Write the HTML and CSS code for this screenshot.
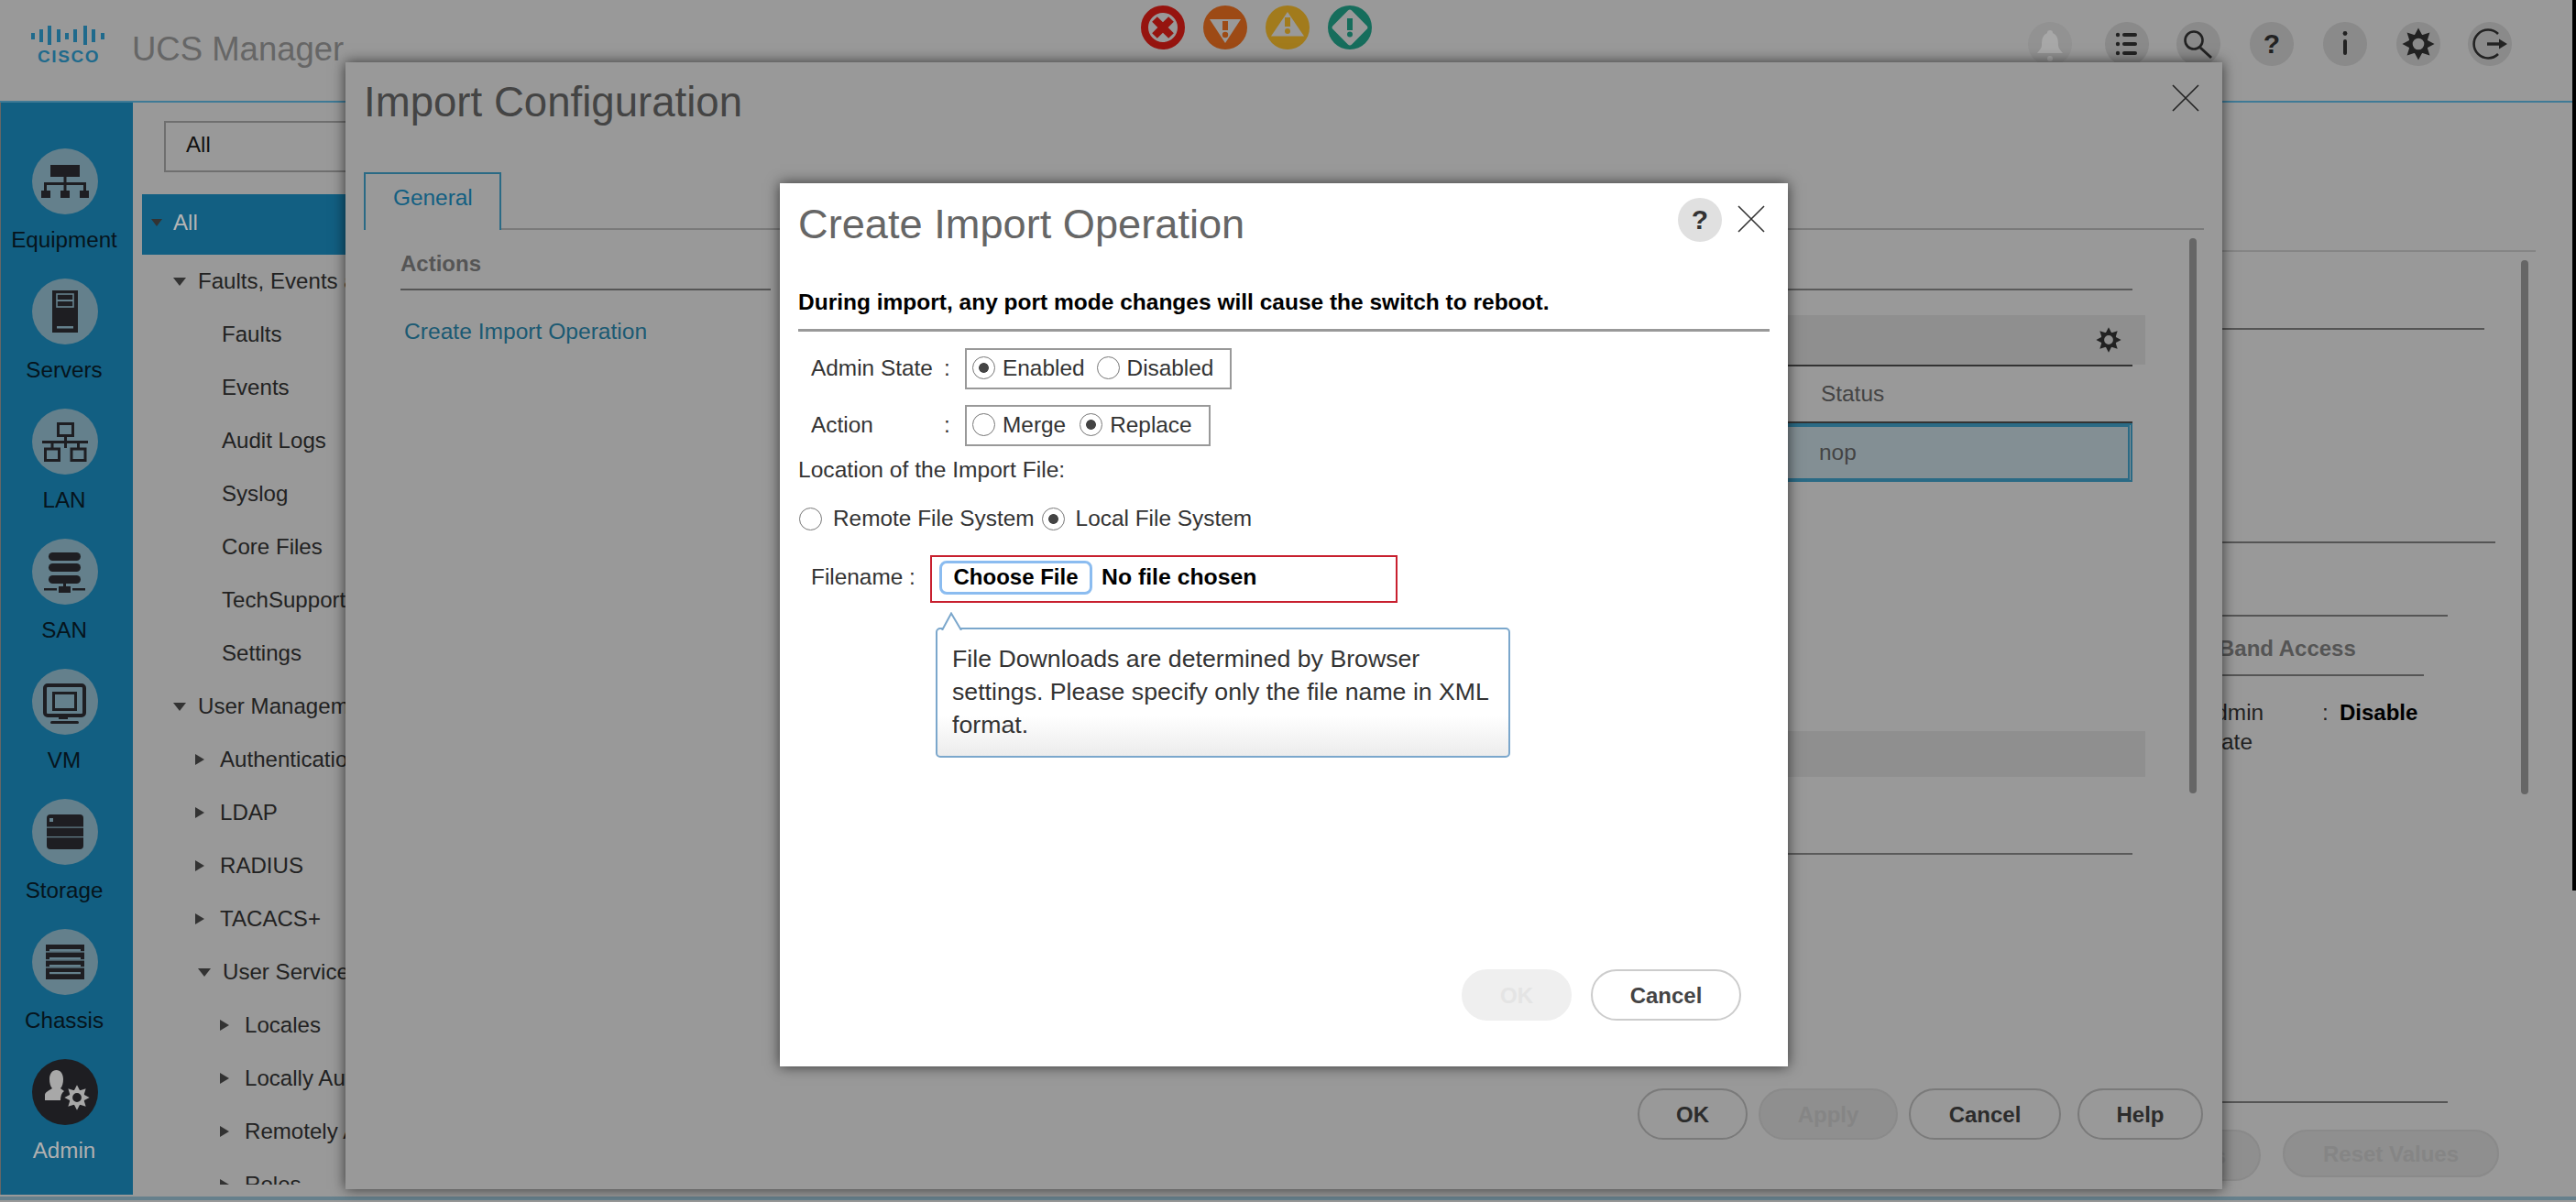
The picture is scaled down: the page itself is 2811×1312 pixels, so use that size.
FILE: index.html
```html
<!DOCTYPE html>
<html lang="en">
<head>
  <meta charset="UTF-8">
  <meta name="viewport" content="width=device-width, initial-scale=1.0">
  <title>UCS Manager - Create Import Operation</title>
  <link rel="stylesheet" href="styles.css">
</head>
<body>

<svg class="defs" xmlns="http://www.w3.org/2000/svg">
  <symbol id="gear" viewBox="-20 -20 40 40">
    <circle r="9.5" fill="none" stroke="currentColor" stroke-width="5"/>
    <g fill="currentColor">
      <polygon points="-5,-10 0,-19.5 5,-10"/>
      <polygon points="-5,-10 0,-19.5 5,-10" transform="rotate(45)"/>
      <polygon points="-5,-10 0,-19.5 5,-10" transform="rotate(90)"/>
      <polygon points="-5,-10 0,-19.5 5,-10" transform="rotate(135)"/>
      <polygon points="-5,-10 0,-19.5 5,-10" transform="rotate(180)"/>
      <polygon points="-5,-10 0,-19.5 5,-10" transform="rotate(225)"/>
      <polygon points="-5,-10 0,-19.5 5,-10" transform="rotate(270)"/>
      <polygon points="-5,-10 0,-19.5 5,-10" transform="rotate(315)"/>
    </g>
  </symbol>
  <symbol id="close-x" viewBox="0 0 30 30">
    <path d="M1 1 L29 29 M29 1 L1 29" fill="none" stroke="currentColor" stroke-width="1.6"/>
  </symbol>
</svg>

<!-- top bar -->
<header class="topbar">
  <div class="logo">
    <svg class="logo-bars" viewBox="0 0 81 22" width="81" height="22">
      <g fill="#1f6a8c">
        <rect x="1" y="8" width="4" height="7"/>
        <rect x="10" y="4" width="4" height="14"/>
        <rect x="19" y="0" width="4" height="21"/>
        <rect x="29" y="4" width="4" height="14"/>
        <rect x="38" y="8" width="4" height="7"/>
        <rect x="47" y="4" width="4" height="14"/>
        <rect x="58" y="0" width="4" height="21"/>
        <rect x="67" y="4" width="4" height="14"/>
        <rect x="77" y="8" width="4" height="7"/>
      </g>
    </svg>
    <span class="logo-word">CISCO</span>
  </div>
  <div class="app-name">UCS Manager</div>

  <div class="status-icons">
    <svg viewBox="0 0 48 48" width="48" height="48">
      <circle cx="24" cy="24" r="20" fill="#999" stroke="#96140f" stroke-width="8"/>
      <path d="M15 15 L33 33 M33 15 L15 33" stroke="#96140f" stroke-width="8" fill="none"/>
    </svg>
    <svg viewBox="0 0 48 48" width="48" height="48">
      <circle cx="24" cy="24" r="24" fill="#9d4a15"/>
      <polygon points="7,15 41,15 24,41" fill="#999"/>
      <rect x="21" y="17" width="6" height="10" fill="#9d4a15"/>
      <circle cx="24" cy="32" r="3.2" fill="#9d4a15"/>
    </svg>
    <svg viewBox="0 0 48 48" width="48" height="48">
      <circle cx="24" cy="24" r="24" fill="#a27b1c"/>
      <polygon points="24,7 42,33.5 6,33.5" fill="#999"/>
      <rect x="21" y="13" width="6" height="10" fill="#a27b1c"/>
      <circle cx="24" cy="28" r="3" fill="#a27b1c"/>
    </svg>
    <svg viewBox="0 0 48 48" width="48" height="48">
      <circle cx="24" cy="24" r="24" fill="#166d5c"/>
      <rect x="9.5" y="9.5" width="29" height="29" rx="3" fill="#999" transform="rotate(45 24 24)"/>
      <rect x="21" y="14" width="6" height="13" fill="#166d5c"/>
      <circle cx="24" cy="31.5" r="3" fill="#166d5c"/>
    </svg>
  </div>

  <div class="tools">
    <div class="tool tool-off">
      <svg viewBox="0 0 48 48" width="48" height="48">
        <path d="M24 9 a3 3 0 0 1 3 3 c5 2 6 7 6 13 c0 4 3 6 5 9 H10 c2 -3 5 -5 5 -9 c0 -6 1 -11 6 -13 a3 3 0 0 1 3 -3 Z" fill="#a8a8a8"/>
        <circle cx="24" cy="40" r="3" fill="#a8a8a8"/>
      </svg>
    </div>
    <div class="tool tool-far">
      <svg viewBox="0 0 48 48" width="48" height="48">
        <g fill="#222">
          <circle cx="14" cy="14" r="2.2"/><rect x="19" y="12" width="16" height="4" rx="2"/>
          <circle cx="14" cy="24" r="2.2"/><rect x="19" y="22" width="16" height="4" rx="2"/>
          <circle cx="14" cy="34" r="2.2"/><rect x="19" y="32" width="16" height="4" rx="2"/>
        </g>
      </svg>
    </div>
    <div class="tool">
      <svg viewBox="0 0 48 48" width="48" height="48">
        <circle cx="19" cy="20" r="9.5" fill="none" stroke="#222" stroke-width="2.6"/>
        <path d="M26 28 L38 39" stroke="#222" stroke-width="3" fill="none"/>
      </svg>
    </div>
    <div class="tool tool-wide tool-q">?</div>
    <div class="tool tool-wide">
      <svg viewBox="0 0 48 48" width="48" height="48">
        <circle cx="24" cy="12.5" r="2.4" fill="#222"/>
        <rect x="22" y="19" width="4" height="17" rx="2" fill="#222"/>
      </svg>
    </div>
    <div class="tool tool-wide">
      <svg class="tool-gear" width="36" height="36"><use href="#gear"/></svg>
    </div>
    <div class="tool">
      <svg viewBox="0 0 48 48" width="48" height="48">
        <path d="M33 13 A15.5 15.5 0 1 0 33 35" fill="none" stroke="#222" stroke-width="2.6"/>
        <path d="M21 24 H36" stroke="#222" stroke-width="3.4" fill="none"/>
        <polygon points="34,18.5 43,24 34,29.5" fill="#222"/>
      </svg>
    </div>
  </div>
</header>

<div class="app">
  <!-- left navigation -->
  <nav class="sidebar">
    <div class="nav-item">
      <div class="nav-icon">
        <svg viewBox="0 0 72 72" width="72" height="72">
          <rect x="20" y="18" width="32" height="13"/>
          <rect x="34.5" y="31" width="3" height="16"/>
          <path d="M14.5 46 V38.5 H57.5 V46" fill="none" stroke="currentColor" stroke-width="3"/>
          <rect x="10" y="46" width="10" height="8"/>
          <rect x="31" y="46" width="10" height="8"/>
          <rect x="52" y="46" width="10" height="8"/>
        </svg>
      </div>
      <span>Equipment</span>
    </div>
    <div class="nav-item">
      <div class="nav-icon">
        <svg viewBox="0 0 72 72" width="72" height="72">
          <rect x="22" y="13" width="28" height="46"/>
          <rect x="27" y="17" width="18" height="14" fill="none" stroke="#64808c" stroke-width="1.6"/>
          <rect x="27" y="23" width="18" height="2" fill="#64808c"/>
          <rect x="27" y="52" width="18" height="2.5" fill="#64808c"/>
        </svg>
      </div>
      <span>Servers</span>
    </div>
    <div class="nav-item">
      <div class="nav-icon">
        <svg viewBox="0 0 72 72" width="72" height="72">
          <g fill="none" stroke="currentColor" stroke-width="3">
            <rect x="28.5" y="16.5" width="16" height="13"/>
            <path d="M36.5 30 V43 M11 36.5 H61"/>
            <rect x="14.5" y="44" width="15" height="12.5"/>
            <rect x="43" y="44" width="15" height="12.5"/>
            <path d="M22 37 V44 M50.5 37 V44"/>
          </g>
        </svg>
      </div>
      <span>LAN</span>
    </div>
    <div class="nav-item">
      <div class="nav-icon">
        <svg viewBox="0 0 72 72" width="72" height="72">
          <rect x="18" y="15" width="35" height="9" rx="4.5"/>
          <rect x="18" y="27" width="35" height="9" rx="4.5"/>
          <rect x="18" y="40" width="35" height="9" rx="4.5"/>
          <rect x="34" y="49" width="3" height="4"/>
          <rect x="29" y="52" width="13" height="7"/>
          <rect x="13" y="54" width="14" height="2.5"/>
          <rect x="44" y="54" width="14" height="2.5"/>
        </svg>
      </div>
      <span>SAN</span>
    </div>
    <div class="nav-item">
      <div class="nav-icon">
        <svg viewBox="0 0 72 72" width="72" height="72">
          <rect x="14" y="18" width="43" height="33" rx="3" fill="none" stroke="currentColor" stroke-width="4"/>
          <rect x="23.5" y="26.5" width="24" height="18" fill="none" stroke="currentColor" stroke-width="3"/>
          <rect x="29" y="52" width="10" height="3"/>
          <rect x="20" y="57" width="31" height="3" rx="1.5"/>
        </svg>
      </div>
      <span>VM</span>
    </div>
    <div class="nav-item">
      <div class="nav-icon">
        <svg viewBox="0 0 72 72" width="72" height="72">
          <rect x="16" y="17" width="40" height="38" rx="4"/>
          <rect x="16" y="30.5" width="40" height="1.2" fill="#64808c"/>
          <rect x="16" y="41" width="40" height="1.2" fill="#64808c"/>
          <rect x="19" y="21" width="4" height="4" fill="#64808c"/>
        </svg>
      </div>
      <span>Storage</span>
    </div>
    <div class="nav-item">
      <div class="nav-icon">
        <svg viewBox="0 0 72 72" width="72" height="72">
          <rect x="15" y="17" width="42" height="38"/>
          <g fill="#64808c">
            <rect x="19" y="22" width="34" height="2.2"/>
            <rect x="15" y="24.2" width="42" height="1.4"/>
            <rect x="19" y="31" width="34" height="2.2"/>
            <rect x="15" y="33.2" width="42" height="1.4"/>
            <rect x="19" y="39" width="34" height="2.2"/>
            <rect x="15" y="41.2" width="42" height="1.4"/>
            <rect x="19" y="47" width="34" height="2.2"/>
          </g>
        </svg>
      </div>
      <span>Chassis</span>
    </div>
    <div class="nav-item nav-active">
      <div class="nav-icon">
        <svg viewBox="0 0 72 72" width="72" height="72">
          <path d="M14 45 V39 c0 -3 5 -5 8 -7 c-2 -2 -3 -6 -3 -10 c0 -6 3 -10 7.5 -10 s7.5 4 7.5 10 c0 4 -1 8 -3 10 l4 3 c-3 2 -4 6 -4 10 Z" fill="#a8a8a8"/>
          <use href="#gear" x="35" y="28" width="28" height="28"/>
        </svg>
      </div>
      <span>Admin</span>
    </div>
  </nav>

  <!-- tree panel -->
  <aside class="tree">
    <div class="filter">All</div>
    <div class="row row-all"><i class="caret-down"></i>All</div>
    <div class="row lv1"><i class="caret-down"></i>Faults, Events and Audit Log</div>
    <div class="row lv2">Faults</div>
    <div class="row lv2">Events</div>
    <div class="row lv2">Audit Logs</div>
    <div class="row lv2">Syslog</div>
    <div class="row lv2">Core Files</div>
    <div class="row lv2">TechSupport</div>
    <div class="row lv2">Settings</div>
    <div class="row lv1"><i class="caret-down"></i>User Management</div>
    <div class="row lv2c"><i class="caret-right"></i>Authentication</div>
    <div class="row lv2c"><i class="caret-right"></i>LDAP</div>
    <div class="row lv2c"><i class="caret-right"></i>RADIUS</div>
    <div class="row lv2c"><i class="caret-right"></i>TACACS+</div>
    <div class="row lv2o"><i class="caret-down"></i>User Services</div>
    <div class="row lv3"><i class="caret-right"></i>Locales</div>
    <div class="row lv3"><i class="caret-right"></i>Locally Authenticated Users</div>
    <div class="row lv3"><i class="caret-right"></i>Remotely Authenticated Users</div>
    <div class="row lv3"><i class="caret-right"></i>Roles</div>
  </aside>

  <!-- page behind the windows -->
  <main class="content">
    <div class="rule rule-a"></div>
    <div class="rule rule-b"></div>
    <div class="rule rule-c"></div>
    <div class="rule rule-d"></div>
    <section class="oob">
      <h3>Out-of-Band Access</h3>
      <div class="oob-row">
        <span class="oob-label">Admin<br>State</span>
        <span class="oob-colon">:</span>
        <b>Disable</b>
      </div>
    </section>
    <div class="rule rule-e"></div>
    <div class="content-buttons">
      <button class="btn btn-off btn-save">Save Changes</button>
      <button class="btn btn-off btn-reset">Reset Values</button>
    </div>
    <div class="scroll-thumb content-thumb"></div>
  </main>
</div>
<div class="bottom-line"></div>
<div class="edge"></div>

<!-- Import Configuration window -->
<div class="window import-window">
  <h2 class="import-title">Import Configuration</h2>
  <svg class="import-close" width="30" height="30"><use href="#close-x"/></svg>

  <div class="tabs">
    <div class="tab">General</div>
  </div>

  <div class="import-body">
    <div class="actions">
      <h3>Actions</h3>
      <a class="action-link">Create Import Operation</a>
    </div>
    <div class="import-table">
      <div class="rule-dark"></div>
      <div class="table-bar">
        <svg class="table-gear" width="28" height="28"><use href="#gear"/></svg>
      </div>
      <div class="rule-black"></div>
      <div class="table-head">Status</div>
      <div class="rule-black"></div>
      <div class="table-row">nop</div>
      <div class="table-bar table-bar-low"></div>
      <div class="rule-dark rule-low"></div>
    </div>
  </div>

  <div class="scroll-thumb import-thumb"></div>

  <div class="import-footer">
    <button class="btn btn-ok">OK</button>
    <button class="btn btn-off btn-apply">Apply</button>
    <button class="btn btn-cancel">Cancel</button>
    <button class="btn btn-help">Help</button>
  </div>
</div>

<!-- Create Import Operation dialog -->
<div class="window create-window">
  <h2 class="create-title">Create Import Operation</h2>
  <div class="create-help">?</div>
  <svg class="create-close" width="30" height="30"><use href="#close-x"/></svg>

  <p class="warning">During import, any port mode changes will cause the switch to reboot.</p>

  <div class="form-row form-first">
    <span class="form-label">Admin State</span><span class="form-colon">:</span>
    <div class="radio-box">
      <label><input type="radio" name="state" checked>Enabled</label>
      <label><input type="radio" name="state">Disabled</label>
    </div>
  </div>
  <div class="form-row form-second">
    <span class="form-label">Action</span><span class="form-colon">:</span>
    <div class="radio-box">
      <label><input type="radio" name="action">Merge</label>
      <label><input type="radio" name="action" checked>Replace</label>
    </div>
  </div>

  <p class="location">Location of the Import File:</p>
  <div class="location-row">
    <label><input type="radio" name="where">Remote File System</label>
    <label><input type="radio" name="where" checked>Local File System</label>
  </div>

  <div class="file-row">
    <span class="file-label">Filename :</span>
    <div class="file-box">
      <button class="file-button">Choose File</button>
      <span class="file-name">No file chosen</span>
    </div>
  </div>

  <div class="tip">
    <svg class="tip-arrow" width="24" height="20" viewBox="0 0 24 20">
      <path d="M1 20 L11 1.5 L22 20" fill="#fff" stroke="#7ba7cc" stroke-width="2"/>
    </svg>
    File Downloads are determined by Browser settings. Please specify only the file name in XML format.
  </div>

  <div class="create-footer">
    <button class="btn btn-ghost">OK</button>
    <button class="btn btn-light">Cancel</button>
  </div>
</div>

</body>
</html>
```

FILE: styles.css
```css
* {
  box-sizing: border-box;
}
html, body {
  margin: 0;
  height: 1312px;
  overflow: hidden;
}
body {
  position: relative;
  background-color: #999;
  font-family: "Liberation Sans", Arial, sans-serif;
  font-size: 24.4px;
  line-height: 30px;
  color: #222;
}
h2, h3, p {
  margin: 0;
}
.defs {
  display: none;
}

/* top bar */
.topbar {
  display: flex;
  align-items: flex-start;
  height: 112px;
  padding-left: 33px;
  padding-right: 70px;
  border-bottom: 2px solid #3f7a96;
}
.logo {
  width: 81px;
  margin-top: 28px;
}
.logo-bars {
  display: block;
}
.logo-word {
  display: block;
  margin-top: 3px;
  padding-left: 8px;
  font-size: 19px;
  line-height: 17px;
  font-weight: bold;
  letter-spacing: 1.6px;
  color: #1f6a8c;
}
.app-name {
  margin-left: 30px;
  margin-top: 32px;
  font-size: 36.5px;
  line-height: 44px;
  color: #666;
  white-space: nowrap;
}
.status-icons {
  display: flex;
  gap: 20px;
  margin-top: 6px;
  margin-left: 870px;
}
.status-icons svg {
  display: block;
}
.tools {
  display: flex;
  margin-left: auto;
  margin-top: 24px;
  gap: 30px;
}
.tool {
  display: flex;
  align-items: center;
  justify-content: center;
  width: 48px;
  height: 48px;
  border-radius: 50%;
  background-color: #8a8a8a;
  color: #222;
}
.tool-off {
  background-color: #929292;
}
.tool-far {
  margin-left: 6px;
}
.tool-wide {
  margin-left: 2px;
}
.tool-q {
  font-size: 30px;
  font-weight: bold;
}

/* left navigation */
.app {
  display: flex;
  height: 1192px;
}
.sidebar {
  flex: none;
  width: 145px;
  padding-top: 50px;
  padding-right: 4px;
  background-color: #125f82;
  border-left: 1px solid #666;
}
.nav-item {
  display: flex;
  flex-direction: column;
  align-items: center;
  height: 142px;
  font-size: 24.2px;
  color: #06141c;
}
.nav-item span {
  margin-top: 13px;
  margin-right: 2px;
}
.nav-icon {
  width: 72px;
  height: 72px;
  border-radius: 50%;
  background-color: #64808c;
  color: #1e1e22;
}
.nav-icon svg {
  display: block;
  fill: currentColor;
}
.nav-active {
  color: #b0b0b0;
}
.nav-active .nav-icon {
  background-color: #1e1e22;
  color: #a8a8a8;
}

/* tree */
.tree {
  flex: none;
  width: 240px;
  height: 1181px;
  overflow: hidden;
  font-size: 24.1px;
}
.filter {
  margin: 20px 0 0 34px;
  height: 56px;
  padding-left: 22px;
  border: 2px solid #6f6f6f;
  line-height: 48px;
  color: #111;
}
.row {
  display: flex;
  align-items: center;
  height: 58px;
  white-space: nowrap;
}
.row-all {
  height: 66px;
  margin-top: 24px;
  margin-left: 10px;
  padding-left: 10px;
  padding-bottom: 4px;
  background-color: #125f82;
  color: #b5b5b5;
}
.row-all .caret-down {
  border-width: 8px 6px 0;
  margin-right: 12px;
}
.lv1 {
  padding-left: 44px;
}
.lv2 {
  padding-left: 97px;
}
.lv2c {
  padding-left: 68px;
}
.lv2o {
  padding-left: 71px;
}
.lv3 {
  padding-left: 95px;
}
.caret-down {
  flex: none;
  width: 0;
  height: 0;
  margin-right: 13px;
  border-style: solid;
  border-width: 9px 7px 0;
  border-color: #333 transparent transparent;
}
.caret-right {
  flex: none;
  width: 0;
  height: 0;
  margin-right: 17px;
  border-style: solid;
  border-width: 6px 0 6px 10px;
  border-color: transparent transparent transparent #333;
}

/* page behind the windows */
.content {
  position: relative;
  flex: 1;
  display: flex;
  flex-direction: column;
}
.rule {
  flex: none;
  height: 2px;
  background-color: #555;
}
.rule-a {
  margin-top: 161px;
  margin-right: 44px;
  background-color: #858585;
}
.rule-b {
  margin-top: 83px;
  margin-right: 100px;
}
.rule-c {
  margin-top: 231px;
  margin-right: 88px;
}
.rule-d {
  margin-top: 78px;
  margin-right: 140px;
}
.rule-e {
  margin-top: 376px;
  margin-right: 140px;
}
.oob {
  align-self: flex-end;
  width: 304px;
  margin-right: 166px;
}
.oob h3 {
  margin-top: 20px;
  padding-bottom: 13px;
  border-bottom: 2px solid #555;
  font-size: 24px;
  line-height: 30px;
  color: #555;
}
.oob-row {
  display: flex;
  margin-top: 24px;
  padding-left: 60px;
  line-height: 32px;
}
.oob-label {
  width: 133px;
}
.oob-colon {
  width: 19px;
}
.oob-row b {
  font-size: 24px;
  color: #000;
}
.content-buttons {
  display: flex;
  justify-content: flex-end;
  align-items: flex-start;
  gap: 24px;
  margin-top: 29px;
  margin-right: 84px;
}
.scroll-thumb {
  position: absolute;
  width: 8px;
  border-radius: 4px;
  background-color: #666;
}
.content-thumb {
  top: 172px;
  right: 52px;
  height: 583px;
}
.bottom-line {
  height: 4px;
  margin-top: 2px;
  background-color: #66808c;
}
.edge {
  position: absolute;
  top: 0;
  right: 0;
  width: 4px;
  height: 972px;
  background-color: #000;
}

/* buttons */
.btn {
  height: 56px;
  padding: 2px 0 0;
  border: 2px solid #7a7a7a;
  border-radius: 28px;
  background-color: transparent;
  font-family: inherit;
  font-size: 24px;
  font-weight: bold;
  color: #2c2c2c;
  white-space: nowrap;
}
.btn-off {
  background-color: #8f8f8f;
  border-color: #8a8a8a;
  color: #858585;
}
.btn-save {
  width: 240px;
}
.btn-reset {
  width: 236px;
  height: 52px;
}
.btn-ok {
  width: 120px;
}
.btn-apply {
  width: 152px;
}
.btn-cancel {
  width: 166px;
}
.btn-help {
  width: 137px;
  margin-left: 6px;
}

/* windows */
.window {
  position: absolute;
  display: flex;
  flex-direction: column;
  box-shadow: 0 0 14px rgba(0, 0, 0, 0.65);
}
.import-window {
  left: 377px;
  top: 68px;
  width: 2048px;
  height: 1230px;
  padding-bottom: 54px;
  background-color: #999;
}
.import-title {
  margin: 16px 0 0 20px;
  font-size: 45.6px;
  line-height: 56px;
  font-weight: normal;
  color: #444;
}
.import-close {
  position: absolute;
  top: 24px;
  right: 25px;
  color: #222;
}
.tabs {
  display: flex;
  height: 63px;
  margin: 48px 20px 0;
  border-bottom: 2px solid #7a7a7a;
}
.tab {
  width: 150px;
  height: 63px;
  padding: 11px 0 0 30px;
  border: 2px solid #2a6a85;
  border-bottom: none;
  background-color: #999;
  color: #125f82;
}
.import-body {
  display: flex;
}
.actions {
  width: 404px;
  margin-left: 60px;
  padding-top: 22px;
}
.actions h3 {
  padding-bottom: 12px;
  border-bottom: 2px solid #555;
  font-size: 24px;
  line-height: 30px;
  color: #555;
}
.action-link {
  display: block;
  margin-top: 30px;
  padding-left: 4px;
  font-size: 24.6px;
  color: #1b5a73;
  white-space: nowrap;
}
.import-table {
  width: 1427px;
  margin-left: 59px;
}
.rule-dark {
  height: 2px;
  margin-top: 64px;
  background-color: #5a5a5a;
}
.rule-low {
  margin-top: 83px;
}
.table-bar {
  display: flex;
  align-items: center;
  justify-content: flex-end;
  height: 54px;
  margin-top: 27px;
  margin-right: -14px;
  padding-right: 26px;
  background-color: #8f8f8f;
}
.table-bar-low {
  height: 50px;
  margin-top: 272px;
}
.table-gear {
  color: #222;
}
.rule-black {
  height: 2px;
  background-color: #333;
}
.table-head {
  height: 60px;
  padding-left: 1087px;
  line-height: 60px;
  color: #444;
}
.table-row {
  height: 64px;
  padding-left: 1081px;
  border: 4px solid #2a6a85;
  border-right: 5px double #2a6a85;
  background-color: #838f94;
  line-height: 56px;
  color: #444;
}
.import-thumb {
  top: 192px;
  right: 28px;
  height: 606px;
}
.import-footer {
  display: flex;
  justify-content: flex-end;
  gap: 12px;
  margin-top: auto;
  padding-right: 21px;
}

/* create dialog */
.create-window {
  left: 851px;
  top: 200px;
  width: 1100px;
  height: 964px;
  padding: 17px 20px 50px;
  background-color: #fff;
  color: #333;
}
.create-title {
  font-size: 45.2px;
  line-height: 56px;
  font-weight: normal;
  color: #666;
}
.create-help {
  position: absolute;
  top: 16px;
  left: 980px;
  width: 48px;
  height: 48px;
  border-radius: 50%;
  background-color: #e0e0e0;
  text-align: center;
  font-size: 30px;
  font-weight: bold;
  line-height: 48px;
  color: #333;
}
.create-close {
  position: absolute;
  top: 24px;
  left: 1045px;
  color: #333;
}
.warning {
  margin-top: 42px;
  padding-bottom: 14px;
  border-bottom: 3px solid #999;
  font-size: 24.5px;
  font-weight: bold;
  color: #000;
}
.form-row {
  display: flex;
  align-items: center;
  padding-left: 14px;
}
.form-first {
  margin-top: 18px;
}
.form-second {
  margin-top: 17px;
}
.form-label {
  width: 145px;
  padding-bottom: 2px;
}
.form-colon {
  width: 23px;
  padding-bottom: 2px;
}
.radio-box {
  display: flex;
  align-items: center;
  gap: 13px;
  height: 45px;
  padding: 0 18px 0 6px;
  border: 2px solid #999;
}
.form-second .radio-box {
  gap: 15px;
}
label {
  display: flex;
  align-items: center;
}
.radio-box label {
  padding-bottom: 2px;
}
input[type="radio"] {
  appearance: none;
  flex: none;
  width: 25px;
  height: 25px;
  margin: 0 8px 0 0;
  border: 1.5px solid #777;
  border-radius: 50%;
  background-color: #fff;
}
input[type="radio"]:checked {
  background-image: radial-gradient(circle, #444 5px, transparent 5.8px);
}
.location {
  margin-top: 11px;
  font-size: 24.6px;
}
.location-row {
  display: flex;
  gap: 8px;
  margin-top: 23px;
  padding-left: 1px;
}
.location-row input[type="radio"] {
  margin-right: 12px;
}
.file-row {
  display: flex;
  align-items: center;
  margin-top: 25px;
  padding-left: 14px;
}
.file-label {
  width: 130px;
  padding-bottom: 4px;
}
.file-box {
  display: flex;
  align-items: center;
  width: 510px;
  height: 52px;
  padding-left: 8px;
  border: 2px solid #c8202f;
}
.file-button {
  width: 167px;
  height: 37px;
  margin-bottom: 3px;
  padding: 0 0 2px;
  border: 3px solid #8bbcf0;
  border-radius: 8px;
  background-color: #fff;
  font-family: inherit;
  font-size: 24px;
  font-weight: bold;
  color: #000;
}
.file-name {
  margin-left: 10px;
  padding-bottom: 4px;
  font-size: 24.8px;
  font-weight: bold;
  color: #000;
}
.tip {
  position: absolute;
  left: 170px;
  top: 485px;
  width: 627px;
  height: 142px;
  padding: 14px 16px 0 16px;
  border: 2px solid #7ba7cc;
  border-radius: 5px;
  background: linear-gradient(#fff 68%, #ececec);
  font-size: 26.7px;
  line-height: 36px;
}
.tip-arrow {
  position: absolute;
  left: 4px;
  top: -19px;
}
.create-footer {
  display: flex;
  justify-content: flex-end;
  gap: 21px;
  margin-top: auto;
  margin-right: 31px;
}
.btn-ghost {
  width: 120px;
  border-color: #efefef;
  background-color: #efefef;
  color: #e4e4e4;
}
.btn-light {
  width: 164px;
  border-color: #ccc;
  color: #444;
}
```
